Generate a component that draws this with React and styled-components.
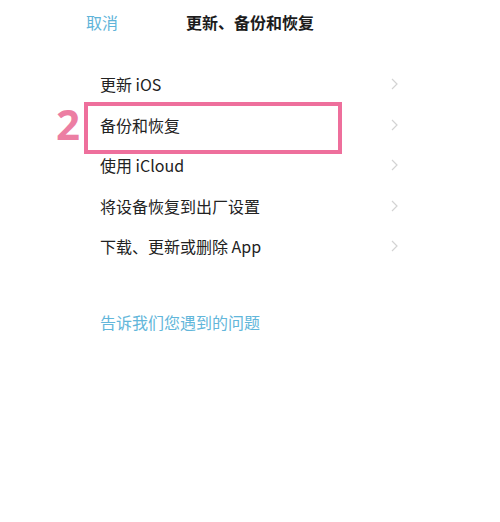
import React from "react";
import styled, { createGlobalStyle } from "styled-components";

const GlobalStyle = createGlobalStyle`
  html, body {
    margin: 0;
    padding: 0;
    background: #ffffff;
  }
  body {
    font-family: "Noto Sans CJK SC", "Noto Sans", sans-serif;
    color: #222222;
  }
`;

const Page = styled.div`
  width: 500px;
  height: 522px;
  background: #ffffff;
  overflow: hidden;
`;

const Header = styled.div`
  height: 43px;
  display: grid;
  grid-template-columns: 1fr auto 1fr;
  align-items: center;
  padding: 0 86px;
`;

const Cancel = styled.span`
  font-size: 16px;
  color: #5fb4d9;
  justify-self: start;
`;

const Title = styled.span`
  font-size: 16px;
  font-weight: 700;
  color: #1c1c1c;
`;

const List = styled.div`
  margin-top: 21px;
  padding: 0 100px;
  display: flex;
  flex-direction: column;
`;

const Row = styled.div`
  position: relative;
  height: 40.5px;
  display: flex;
  align-items: center;
  justify-content: space-between;
  font-size: 16px;
  color: #222222;
`;

const Chevron = styled.svg`
  width: 7px;
  height: 12px;
  margin-right: 2px;
`;

const Highlight = styled.div`
  position: absolute;
  left: -16px;
  top: -3px;
  width: 258px;
  height: 52px;
  box-sizing: border-box;
  border: 4px solid #ee6f9c;
  pointer-events: none;
`;

const Step = styled.span`
  position: absolute;
  left: -44px;
  top: 50%;
  transform: translateY(-52%);
  font-family: "Noto Sans", "DejaVu Sans", sans-serif;
  font-size: 42px;
  font-weight: 700;
  color: #ec7ea3;
  line-height: 1;
`;

const Link = styled.div`
  margin-top: 43px;
  padding-left: 100px;
  font-size: 16px;
  line-height: 24px;
  color: #62b6da;
`;

const items = [
  "更新 iOS",
  "备份和恢复",
  "使用 iCloud",
  "将设备恢复到出厂设置",
  "下载、更新或删除 App",
];

function Arrow() {
  return (
    <Chevron viewBox="0 0 7 12">
      <path d="M1 1 L6 6 L1 11" fill="none" stroke="#d3d3d3" strokeWidth="1.2" />
    </Chevron>
  );
}

export default function App() {
  return (
    <Page>
      <GlobalStyle />
      <Header>
        <Cancel>取消</Cancel>
        <Title>更新、备份和恢复</Title>
        <span />
      </Header>
      <List>
        {items.map((label, i) => (
          <Row key={label}>
            <span>{label}</span>
            <Arrow />
            {i === 1 && (
              <>
                <Highlight />
                <Step>2</Step>
              </>
            )}
          </Row>
        ))}
      </List>
      <Link>告诉我们您遇到的问题</Link>
    </Page>
  );
}
